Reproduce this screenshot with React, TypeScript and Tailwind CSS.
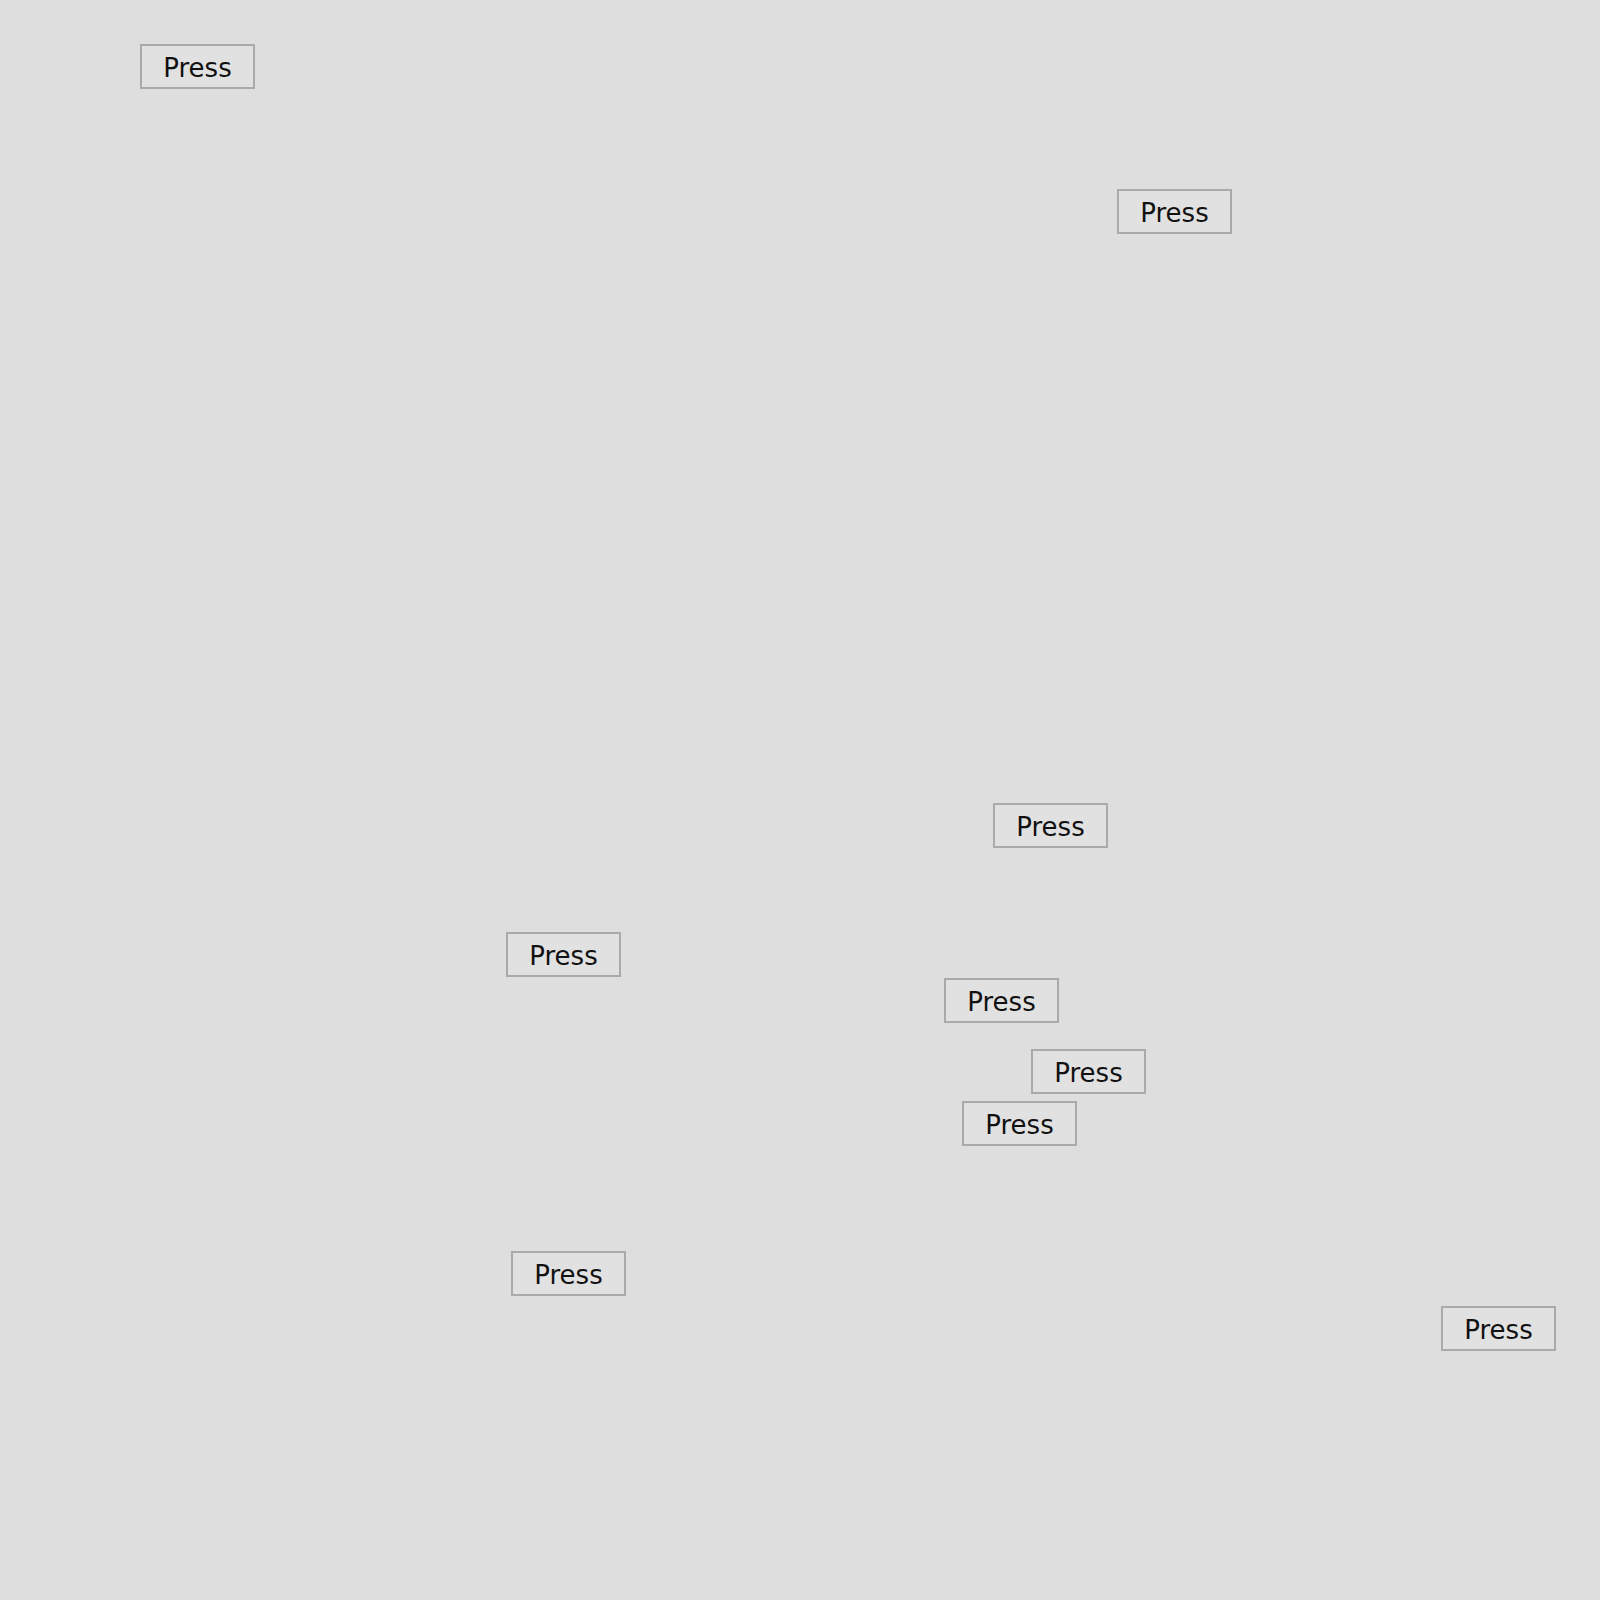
const buttons = [
  { x: 140, y: 44 },
  { x: 1117, y: 189 },
  { x: 993, y: 803 },
  { x: 506, y: 932 },
  { x: 944, y: 978 },
  { x: 1031, y: 1049 },
  { x: 962, y: 1101 },
  { x: 511, y: 1251 },
  { x: 1441, y: 1306 },
];

export default function App() {
  return (
    <div className="relative w-[1600px] h-[1600px] bg-[#dedede] overflow-hidden">
      {buttons.map((b, i) => (
        <button
          key={i}
          className="absolute w-[115px] h-[45px] border-2 border-[#aaaaaa] bg-[#e1e1e1] text-[#111111] text-[26px] leading-none pt-[3px] flex items-center justify-center font-['DejaVu_Sans',sans-serif]"
          style={{ left: b.x, top: b.y }}
        >
          Press
        </button>
      ))}
    </div>
  );
}
